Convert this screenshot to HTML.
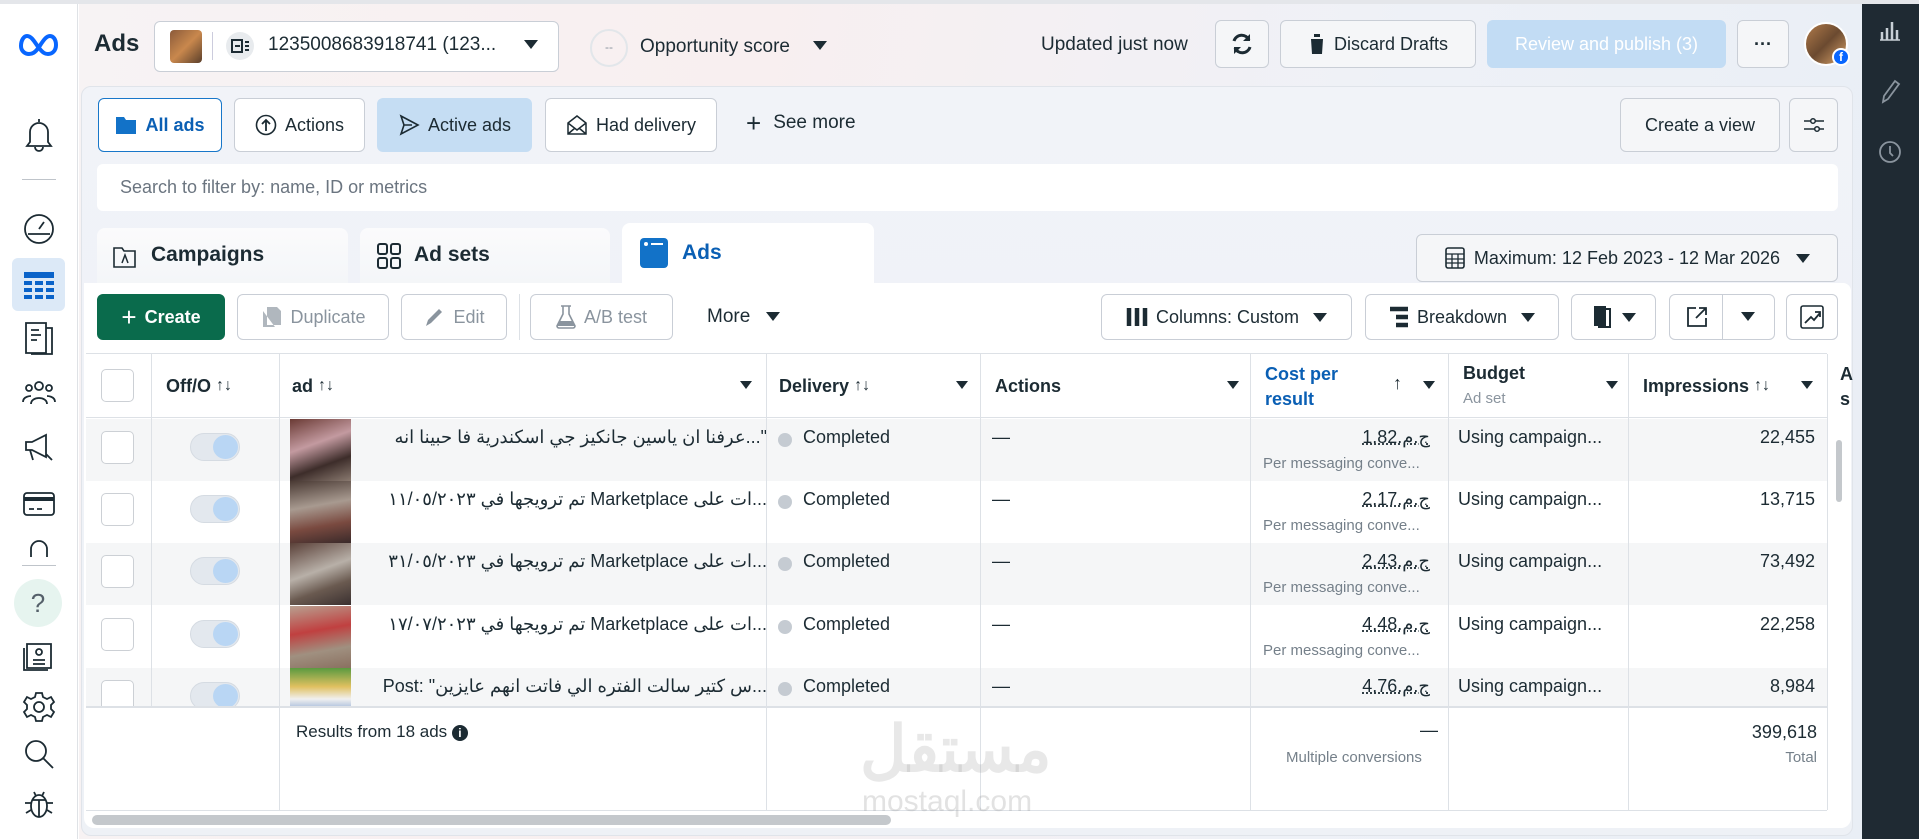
<!DOCTYPE html>
<html><head><meta charset="utf-8">
<style>
*{box-sizing:border-box;margin:0;padding:0}
body{width:1919px;height:839px;overflow:hidden;background:#fff;font-family:"Liberation Sans","Noto Sans CJK SC",sans-serif;color:#1c2b33;position:relative}
.a{position:absolute}
.btn{position:absolute;border:1px solid #c9ced6;border-radius:6px;background:#fff;display:flex;align-items:center;justify-content:center;font-size:18px;color:#1c2b33;gap:8px}
.ic{stroke:#1c2b33;fill:none;stroke-width:1.8}
.side svg{position:absolute;left:22px}
.hd{position:absolute;top:354px;height:64px;display:flex;align-items:center;font-size:18px;font-weight:bold;color:#1c2b33;padding-left:10px}
.vl{position:absolute;top:354px;width:1px;height:456px;background:#dde1e6}
.row{position:absolute;left:86px;width:1741px;height:62px}
.cb{position:absolute;left:15px;top:12px;width:33px;height:33px;border:1px solid #ccd0d5;border-radius:5px;background:#fff}
.tg{position:absolute;left:104px;top:14px;width:50px;height:28px;border-radius:14px;background:#e3e8ee;border:1px solid #d5dbe2}
.tg::after{content:"";position:absolute;right:1px;top:1px;width:25px;height:24px;border-radius:50%;background:#b9d6f4}
.th{position:absolute;left:204px;top:0;width:61px;height:62px}
.t{position:absolute;top:8px;font-size:18px;white-space:nowrap}
.sub{position:absolute;top:36px;font-size:15px;color:#75808a;white-space:nowrap}
.dot{position:absolute;left:692px;top:14px;width:14px;height:14px;border-radius:50%;background:#c5cbd2}
.cost{left:1194px;width:150px;text-align:right;text-decoration:underline dotted}
.imp{left:1560px;width:169px;text-align:right}
</style></head><body>
<div class="a" style="left:0;top:0;width:1919px;height:4px;background:#e4e6ea"></div>
<div class="a side" style="left:0;top:4px;width:78px;height:835px;background:#fff;border-right:1px solid #dfe2e6">
<svg style="left:17px;top:28px" width="44" height="24" viewBox="0 0 44 24"><path d="M4 14c0-6 3-10 6-10 5 0 8 7 12 12 4 5 6 6 9 6 4 0 8-3 8-9 0-6-3-9-6-9-4 0-7 5-11 11-4 6-7 7-10 7-4 0-8-3-8-8z" fill="none" stroke="#0866ff" stroke-width="4"/></svg>
<svg style="top:112px" width="34" height="36" viewBox="0 0 34 36"><path class="ic" d="M17 3v3M8 26V16a9 9 0 0 1 18 0v10l3 4H5l3-4zM13 31a4 4 0 0 0 8 0"/></svg>
<div class="a" style="left:22px;top:175px;width:34px;height:1px;background:#bfc4ca"></div>
<svg style="top:208px" width="34" height="34" viewBox="0 0 34 34"><circle class="ic" cx="17" cy="17" r="14"/><path class="ic" d="M17 17l5-7M6 22h22"/></svg>
<div class="a" style="left:12px;top:254px;width:53px;height:53px;background:#dce9f7;border-radius:6px"></div>
<svg style="top:266px" width="34" height="30" viewBox="0 0 34 30"><rect x="2" y="2" width="30" height="6" fill="#0a63c9"/><g fill="#0a63c9"><rect x="2" y="11" width="8" height="4"/><rect x="13" y="11" width="8" height="4"/><rect x="24" y="11" width="8" height="4"/><rect x="2" y="18" width="8" height="4"/><rect x="13" y="18" width="8" height="4"/><rect x="24" y="18" width="8" height="4"/><rect x="2" y="25" width="8" height="4"/><rect x="13" y="25" width="8" height="4"/><rect x="24" y="25" width="8" height="4"/></g></svg>
<svg style="top:316px" width="34" height="36" viewBox="0 0 34 36"><path class="ic" d="M4 3h20v30H4zM24 8h6v26H9M9 10h8M9 15h10M9 20h6"/></svg>
<svg style="top:374px" width="34" height="30" viewBox="0 0 34 30"><circle class="ic" cx="17" cy="8" r="4"/><circle class="ic" cx="7" cy="10" r="3"/><circle class="ic" cx="27" cy="10" r="3"/><path class="ic" d="M9 26c0-8 16-8 16 0M1 24c0-6 8-6 8-6M33 24c0-6-8-6-8-6"/></svg>
<svg style="top:428px" width="34" height="32" viewBox="0 0 34 32"><path class="ic" d="M4 10h6l14-7v22L10 18H4zM8 18l3 10M24 22l6 6"/></svg>
<svg style="top:486px" width="34" height="28" viewBox="0 0 34 28"><rect class="ic" x="2" y="3" width="30" height="22" rx="3"/><path d="M2 9h30" stroke="#1c2b33" stroke-width="4"/><path class="ic" d="M7 19h5M15 19h5"/></svg>
<svg style="top:535px" width="34" height="20" viewBox="0 0 34 20"><path class="ic" d="M9 18V10a8 8 0 0 1 16 0v8"/></svg>
<div class="a" style="left:22px;top:561px;width:34px;height:1px;background:#bfc4ca"></div>
<div class="a" style="left:14px;top:575px;width:48px;height:48px;border-radius:50%;background:#e6f4ef;font-size:26px;color:#55606a;text-align:center;line-height:48px">?</div>
<svg style="top:636px" width="34" height="32" viewBox="0 0 34 32"><path class="ic" d="M5 4h24v24H5zM2 8v22h24"/><circle class="ic" cx="17" cy="12" r="3"/><path class="ic" d="M11 20h12M11 24h12"/></svg>
<svg style="top:686px" width="34" height="34" viewBox="0 0 34 34"><circle class="ic" cx="17" cy="17" r="5"/><path class="ic" d="M14 3h6l1 4 4 2 4-2 3 5-3 3v4l3 3-3 5-4-2-4 2-1 4h-6l-1-4-4-2-4 2-3-5 3-3v-4L2 12l3-5 4 2 4-2z"/></svg>
<svg style="top:733px" width="34" height="34" viewBox="0 0 34 34"><circle class="ic" cx="14" cy="14" r="10" stroke-width="2.2"/><path class="ic" d="M21 21l10 10" stroke-width="2.4"/></svg>
<svg style="top:782px" width="34" height="34" viewBox="0 0 34 34"><ellipse class="ic" cx="17" cy="20" rx="8" ry="11"/><path class="ic" d="M9 17H3M25 17h6M9 24l-5 3M25 24l5 3M12 6l2 4M22 6l-2 4M10 14h14M17 14v17"/></svg>
</div>
<div class="a" style="left:79px;top:4px;width:1783px;height:835px;background:linear-gradient(100deg,#f7f3f4 0%,#f8eff0 35%,#eef1f7 70%,#e9eef5 100%)"></div>
<div class="a" style="left:94px;top:30px;font-size:24px;font-weight:bold">Ads</div>
<div class="a" style="left:154px;top:21px;width:405px;height:51px;background:#fff;border:1px solid #c9ced6;border-radius:6px"></div>
<div class="a" style="left:170px;top:30px;width:32px;height:33px;border-radius:4px;background:linear-gradient(135deg,#8a5a3a,#c9884d 50%,#5a3f2a)"></div>
<div class="a" style="left:212px;top:32px;width:1px;height:28px;background:#ccd"></div>
<div class="a" style="left:226px;top:32px;width:28px;height:28px;border-radius:50%;background:#e8ebee"></div>
<svg class="a" style="left:231px;top:38px" width="20" height="16" viewBox="0 0 20 16"><rect x="1" y="2" width="10" height="12" fill="none" stroke="#1c2b33" stroke-width="2"/><path d="M4 8h5M14 4h4M14 8h4M14 12h4" stroke="#1c2b33" stroke-width="2"/></svg>
<div class="a" style="left:268px;top:34px;font-size:19px">1235008683918741 (123...</div>
<div class="a" style="left:524px;top:40px;border-left:7px solid transparent;border-right:7px solid transparent;border-top:9px solid #1c2b33"></div>
<div class="a" style="left:590px;top:29px;width:38px;height:38px;border-radius:50%;border:2px solid #e2e6ea;font-size:12px;color:#8a949e;text-align:center;line-height:32px">--</div>
<div class="a" style="left:640px;top:36px;font-size:19px">Opportunity score</div>
<div class="a" style="left:813px;top:41px;border-left:7px solid transparent;border-right:7px solid transparent;border-top:9px solid #1c2b33"></div>
<div class="a" style="left:1041px;top:34px;font-size:19px">Updated just now</div>
<div class="btn" style="left:1215px;top:20px;width:54px;height:48px;background:#f5f6f8"><svg width="26" height="26" viewBox="0 0 26 26"><path d="M20 9A8 8 0 0 0 5 10M6 17a8 8 0 0 0 15-1" fill="none" stroke="#1c2b33" stroke-width="3"/><path d="M21 3v7h-7M5 23v-7h7" fill="#1c2b33"/></svg></div>
<div class="btn" style="left:1280px;top:20px;width:196px;height:48px;background:#f5f6f8"><svg width="18" height="22" viewBox="0 0 18 22"><path d="M1 4h16M6 4V1h6v3M3 6h12l-1 15H4z" fill="#1c2b33"/></svg>Discard Drafts</div>
<div class="btn" style="left:1487px;top:20px;width:239px;height:48px;background:#c2dcf4;border-color:#c2dcf4;color:#fff">Review and publish (3)</div>
<div class="btn" style="left:1737px;top:20px;width:52px;height:48px;background:#f5f6f8;font-weight:bold">···</div>
<div class="a" style="left:1804px;top:22px;width:44px;height:44px;border-radius:50%;background:linear-gradient(135deg,#b07a4a,#6b4a30 50%,#d9a36a);border:2px solid #fff"></div>
<div class="a" style="left:1832px;top:48px;width:18px;height:18px;border-radius:50%;background:#0866ff;border:2px solid #fff;color:#fff;font-size:12px;font-weight:bold;text-align:center;line-height:15px">f</div>
<div class="a" style="left:1862px;top:4px;width:57px;height:835px;background:#1f2a33"></div>
<svg class="a" style="left:1878px;top:18px" width="24" height="24" viewBox="0 0 24 24"><path d="M4 22V14M9 22V10M14 22V4M19 22V12" stroke="#c8cfd6" stroke-width="2.5" fill="none"/><path d="M2 22h20" stroke="#c8cfd6" stroke-width="1.5"/></svg>
<svg class="a" style="left:1878px;top:78px" width="24" height="26" viewBox="0 0 24 26"><path d="M5 24l1-6L17 3l4 3L10 21z" stroke="#8a949e" stroke-width="1.8" fill="none"/></svg>
<svg class="a" style="left:1877px;top:139px" width="26" height="26" viewBox="0 0 26 26"><circle cx="13" cy="13" r="10" stroke="#8a949e" stroke-width="1.8" fill="none"/><path d="M13 7v7l3 3" stroke="#8a949e" stroke-width="1.8" fill="none"/></svg>
<div class="a" style="left:81px;top:86px;width:1772px;height:750px;background:linear-gradient(180deg,#f1f3f8 0%,#eef1f6 100%);border:1px solid #e0e4ea;border-radius:10px"></div>
<div class="btn" style="left:98px;top:98px;width:124px;height:54px;border-color:#1877c9;color:#0a5fb4;font-weight:bold"><svg width="22" height="20" viewBox="0 0 22 20"><path d="M1 2h8l2 3h10v14H1z" fill="#1272c8"/></svg>All ads</div>
<div class="btn" style="left:234px;top:98px;width:131px;height:54px"><svg width="22" height="22" viewBox="0 0 22 22"><circle cx="11" cy="11" r="9.5" fill="none" stroke="#1c2b33" stroke-width="1.6"/><path d="M11 17V6M7 10l4-4 4 4" fill="none" stroke="#1c2b33" stroke-width="1.8"/></svg>Actions</div>
<div class="btn" style="left:377px;top:98px;width:155px;height:54px;background:#c5ddf3;border-color:#c5ddf3"><svg width="22" height="22" viewBox="0 0 22 22"><path d="M3 2l17 9-17 9 3-9z M6 11h8" fill="none" stroke="#1c2b33" stroke-width="1.6"/></svg>Active ads</div>
<div class="btn" style="left:545px;top:98px;width:172px;height:54px"><svg width="22" height="22" viewBox="0 0 22 22"><path d="M2 9l9-7 9 7v11H2zM2 9l9 7 9-7M2 20l7-6M20 20l-7-6" fill="none" stroke="#1c2b33" stroke-width="1.5"/></svg>Had delivery</div>
<div class="a" style="left:746px;top:112px;font-size:19px;display:flex;gap:12px;align-items:center"><span style="font-size:26px;font-weight:300;line-height:20px">+</span>See more</div>
<div class="btn" style="left:1620px;top:98px;width:160px;height:54px;background:#f5f6f8">Create a view</div>
<div class="btn" style="left:1789px;top:98px;width:49px;height:54px;background:#f5f6f8"><svg width="22" height="20" viewBox="0 0 22 20"><path d="M1 6h7M12 6h9M1 14h11M16 14h5" stroke="#1c2b33" stroke-width="1.5"/><circle cx="10" cy="6" r="2.3" fill="none" stroke="#1c2b33" stroke-width="1.5"/><circle cx="14" cy="14" r="2.3" fill="none" stroke="#1c2b33" stroke-width="1.5"/></svg></div>
<div class="a" style="left:97px;top:164px;width:1741px;height:47px;background:#fff;border-radius:6px"></div>
<div class="a" style="left:120px;top:177px;font-size:18px;color:#6b7580">Search to filter by: name, ID or metrics</div>
<div class="a" style="left:97px;top:228px;width:251px;height:60px;background:linear-gradient(180deg,#fbfbfc,#f3f5f8);border-radius:8px 8px 0 0"></div>
<svg class="a" style="left:113px;top:245px" width="24" height="24" viewBox="0 0 24 24"><path d="M1 3h8l2 3h11v16H1z" fill="none" stroke="#1c2b33" stroke-width="1.6"/><path d="M9 18l3-8 3 8" fill="none" stroke="#1c2b33" stroke-width="1.5"/></svg>
<div class="a" style="left:151px;top:243px;font-size:21px;font-weight:bold">Campaigns</div>
<div class="a" style="left:360px;top:228px;width:250px;height:60px;background:linear-gradient(180deg,#fbfbfc,#f3f5f8);border-radius:8px 8px 0 0"></div>
<svg class="a" style="left:376px;top:242px" width="26" height="28" viewBox="0 0 26 28"><g fill="none" stroke="#1c2b33" stroke-width="2"><rect x="2" y="2" width="9" height="10" rx="2"/><rect x="15" y="2" width="9" height="10" rx="2"/><rect x="2" y="16" width="9" height="10" rx="2"/><rect x="15" y="16" width="9" height="10" rx="2"/></g></svg>
<div class="a" style="left:414px;top:243px;font-size:21px;font-weight:bold">Ad sets</div>
<div class="a" style="left:622px;top:223px;width:252px;height:65px;background:#fff;border-radius:8px 8px 0 0"></div>
<svg class="a" style="left:640px;top:238px" width="28" height="30" viewBox="0 0 28 30"><rect x="0" y="0" width="28" height="30" rx="4" fill="#1272c8"/><circle cx="6" cy="6" r="2" fill="#fff"/><path d="M11 6h12" stroke="#fff" stroke-width="2"/></svg>
<div class="a" style="left:682px;top:241px;font-size:21px;font-weight:bold;color:#0a5fb4">Ads</div>
<div class="btn" style="left:1416px;top:234px;width:422px;height:48px;background:#f5f6f8"><svg width="22" height="22" viewBox="0 0 22 22"><rect x="2" y="1" width="18" height="20" rx="2" fill="none" stroke="#1c2b33" stroke-width="1.6"/><path d="M2 7h18M2 12h18M2 16h18M8 7v14M14 7v14" stroke="#1c2b33" stroke-width="1.3"/></svg>Maximum: 12 Feb 2023 - 12 Mar 2026<span style="margin-left:8px;border-left:7px solid transparent;border-right:7px solid transparent;border-top:9px solid #1c2b33"></span></div>
<div class="a" style="left:84px;top:283px;width:1767px;height:545px;background:#fff;border-radius:0 8px 10px 10px"></div>
<div class="btn" style="left:97px;top:294px;width:128px;height:46px;background:#0a6b4c;border-color:#0a6b4c;color:#fff;font-weight:bold"><span style="font-size:26px;font-weight:300;line-height:20px">+</span>Create</div>
<div class="btn" style="left:237px;top:294px;width:152px;height:46px;color:#8a949e"><svg width="22" height="24" viewBox="0 0 22 24"><path d="M7 2h10l4 4v14H7zM3 6v16h12" fill="#b0b7be"/></svg>Duplicate</div>
<div class="btn" style="left:401px;top:294px;width:106px;height:46px;color:#8a949e"><svg width="22" height="22" viewBox="0 0 22 22"><path d="M3 20l2-6L16 3l3 3L8 17z" fill="#8a949e"/></svg>Edit</div>
<div class="a" style="left:519px;top:294px;width:1px;height:46px;background:#dde1e6"></div>
<div class="btn" style="left:530px;top:294px;width:143px;height:46px;color:#8a949e"><svg width="20" height="24" viewBox="0 0 20 24"><path d="M7 1v8L1 21a2 2 0 0 0 2 2h14a2 2 0 0 0 2-2L13 9V1M5 1h10" fill="none" stroke="#8a949e" stroke-width="1.6"/><path d="M3 16h14l2 5H1z" fill="#8a949e"/></svg>A/B test</div>
<div class="a" style="left:707px;top:306px;font-size:19px">More</div>
<div class="a" style="left:766px;top:312px;border-left:7px solid transparent;border-right:7px solid transparent;border-top:9px solid #1c2b33"></div>
<div class="btn" style="left:1101px;top:294px;width:251px;height:46px"><svg width="22" height="20" viewBox="0 0 22 20"><path d="M3 1v18M11 1v18M19 1v18" stroke="#1c2b33" stroke-width="4.5"/></svg>Columns: Custom<span style="margin-left:6px;border-left:7px solid transparent;border-right:7px solid transparent;border-top:9px solid #1c2b33"></span></div>
<div class="btn" style="left:1365px;top:294px;width:194px;height:46px"><svg width="20" height="22" viewBox="0 0 20 22"><path d="M1 3h18M7 11h12M7 19h12" stroke="#1c2b33" stroke-width="4.5"/></svg>Breakdown<span style="margin-left:6px;border-left:7px solid transparent;border-right:7px solid transparent;border-top:9px solid #1c2b33"></span></div>
<div class="btn" style="left:1571px;top:294px;width:85px;height:46px"><svg width="22" height="24" viewBox="0 0 22 24"><path d="M2 1h12v20H2z" fill="#1c2b33"/><path d="M14 4h4v18H6" fill="none" stroke="#1c2b33" stroke-width="2"/></svg><span style="border-left:7px solid transparent;border-right:7px solid transparent;border-top:9px solid #1c2b33"></span></div>
<div class="btn" style="left:1669px;top:294px;width:106px;height:46px;justify-content:flex-start"><svg style="margin-left:16px" width="22" height="22" viewBox="0 0 22 22"><path d="M10 2H2v18h18v-8M13 2h7v7M20 2L10 12" fill="none" stroke="#1c2b33" stroke-width="1.8"/></svg></div>
<div class="a" style="left:1722px;top:295px;width:1px;height:44px;background:#c9ced6"></div>
<div class="a" style="left:1741px;top:312px;border-left:7px solid transparent;border-right:7px solid transparent;border-top:9px solid #1c2b33"></div>
<div class="btn" style="left:1786px;top:294px;width:52px;height:46px"><svg width="24" height="24" viewBox="0 0 24 24"><rect x="1" y="1" width="22" height="22" rx="2" fill="none" stroke="#1c2b33" stroke-width="1.6"/><path d="M5 18l6-6 3 3 6-7M15 7h5v5" fill="none" stroke="#1c2b33" stroke-width="1.8"/></svg></div>
<div class="a" style="left:86px;top:353px;width:1741px;height:1px;background:#dde1e6"></div>
<div class="a" style="left:101px;top:369px;width:33px;height:33px;border:1px solid #ccd0d5;border-radius:5px"></div>
<div class="hd" style="left:156px">Off/O&nbsp;<span style="font-size:16px">↑↓</span></div>
<div class="hd" style="left:282px">ad&nbsp;<span style="font-size:16px">↑↓</span></div>
<div class="a" style="left:740px;top:381px;border-left:6px solid transparent;border-right:6px solid transparent;border-top:8px solid #1c2b33"></div>
<div class="hd" style="left:769px">Delivery&nbsp;<span style="font-size:16px">↑↓</span></div>
<div class="a" style="left:956px;top:381px;border-left:6px solid transparent;border-right:6px solid transparent;border-top:8px solid #1c2b33"></div>
<div class="hd" style="left:985px">Actions</div>
<div class="a" style="left:1227px;top:381px;border-left:6px solid transparent;border-right:6px solid transparent;border-top:8px solid #1c2b33"></div>
<div class="a" style="left:1265px;top:362px;font-size:18px;font-weight:bold;color:#0a5fb4;line-height:25px">Cost per<br>result</div>
<div class="a" style="left:1393px;top:373px;font-size:18px">↑</div>
<div class="a" style="left:1423px;top:381px;border-left:6px solid transparent;border-right:6px solid transparent;border-top:8px solid #1c2b33"></div>
<div class="a" style="left:1463px;top:363px;font-size:18px;font-weight:bold">Budget</div>
<div class="a" style="left:1463px;top:390px;font-size:15px;color:#8a949e">Ad set</div>
<div class="a" style="left:1606px;top:381px;border-left:6px solid transparent;border-right:6px solid transparent;border-top:8px solid #1c2b33"></div>
<div class="hd" style="left:1633px">Impressions&nbsp;<span style="font-size:16px">↑↓</span></div>
<div class="a" style="left:1801px;top:381px;border-left:6px solid transparent;border-right:6px solid transparent;border-top:8px solid #1c2b33"></div>
<div class="a" style="left:1840px;top:362px;font-size:18px;font-weight:bold;line-height:25px">A<br>s</div>
<div class="a" style="left:86px;top:417px;width:1741px;height:1px;background:#dde1e6"></div>
<div class="row" style="top:419px;background:#f5f6f7"><div class="cb"></div><div class="tg"></div><div class="th" style="background:linear-gradient(160deg,#6a3a34,#c39aa0 40%,#3d2d2a 70%,#8a7a70)"></div><div class="t" style="left:276px;direction:rtl;width:405px;text-align:right">"...عرفنا ان ياسين جانكيز جي اسكندرية فا حبينا انه</div><div class="dot"></div><div class="t" style="left:717px">Completed</div><div class="t" style="left:906px">—</div><div class="t cost">1.82.ج.م</div><div class="sub" style="left:1177px">Per messaging conve...</div><div class="t" style="left:1372px">Using campaign...</div><div class="t imp">22,455</div></div>
<div class="row" style="top:481px;background:#fff"><div class="cb"></div><div class="tg"></div><div class="th" style="background:linear-gradient(170deg,#4a3a34,#a89a90 40%,#7a4a40 70%,#3a2a2a)"></div><div class="t" style="left:276px;direction:rtl;width:405px;text-align:right">...ات على Marketplace تم ترويجها في ١١/٠٥/٢٠٢٣</div><div class="dot"></div><div class="t" style="left:717px">Completed</div><div class="t" style="left:906px">—</div><div class="t cost">2.17.ج.م</div><div class="sub" style="left:1177px">Per messaging conve...</div><div class="t" style="left:1372px">Using campaign...</div><div class="t imp">13,715</div></div>
<div class="row" style="top:543px;background:#f5f6f7"><div class="cb"></div><div class="tg"></div><div class="th" style="background:linear-gradient(160deg,#5a4038,#b8b0a8 45%,#6a5a50 70%,#3a3030)"></div><div class="t" style="left:276px;direction:rtl;width:405px;text-align:right">...ات على Marketplace تم ترويجها في ٣١/٠٥/٢٠٢٣</div><div class="dot"></div><div class="t" style="left:717px">Completed</div><div class="t" style="left:906px">—</div><div class="t cost">2.43.ج.م</div><div class="sub" style="left:1177px">Per messaging conve...</div><div class="t" style="left:1372px">Using campaign...</div><div class="t imp">73,492</div></div>
<div class="row" style="top:606px;background:#fff"><div class="cb"></div><div class="tg"></div><div class="th" style="background:linear-gradient(170deg,#b8a090,#c04040 40%,#a09080 70%,#8a7060)"></div><div class="t" style="left:276px;direction:rtl;width:405px;text-align:right">...ات على Marketplace تم ترويجها في ١٧/٠٧/٢٠٢٣</div><div class="dot"></div><div class="t" style="left:717px">Completed</div><div class="t" style="left:906px">—</div><div class="t cost">4.48.ج.م</div><div class="sub" style="left:1177px">Per messaging conve...</div><div class="t" style="left:1372px">Using campaign...</div><div class="t imp">22,258</div></div>
<div class="row" style="top:668px;height:39px;overflow:hidden;background:#f5f6f7"><div class="cb"></div><div class="tg"></div><div class="th" style="background:linear-gradient(180deg,#5a9a40,#e0c060 30%,#f0f0f0 50%,#4a7ac0 85%)"></div><div class="t" style="left:276px;direction:rtl;width:405px;text-align:right">...س كتير سالت الفتره الي فاتت انهم عايزين" :Post</div><div class="dot"></div><div class="t" style="left:717px">Completed</div><div class="t" style="left:906px">—</div><div class="t cost">4.76.ج.م</div><div class="t" style="left:1372px">Using campaign...</div><div class="t imp">8,984</div></div>
<div class="a" style="left:86px;top:706px;width:1741px;height:2px;background:#dde1e6"></div>
<div class="vl" style="left:151px;height:353px"></div>
<div class="vl" style="left:279px"></div>
<div class="vl" style="left:766px"></div>
<div class="vl" style="left:980px"></div>
<div class="vl" style="left:1250px"></div>
<div class="vl" style="left:1448px"></div>
<div class="vl" style="left:1628px"></div>
<div class="vl" style="left:1827px"></div>
<div class="a" style="left:296px;top:722px;font-size:17px">Results from 18 ads <span style="display:inline-block;width:16px;height:16px;border-radius:50%;background:#1c2b33;color:#fff;font-size:12px;text-align:center;line-height:16px;font-weight:bold">i</span></div>
<div class="a" style="left:1420px;top:720px;font-size:18px">—</div>
<div class="a" style="left:1286px;top:749px;font-size:15px;color:#75808a">Multiple conversions</div>
<div class="a" style="left:1700px;top:722px;font-size:18px;width:117px;text-align:right">399,618</div>
<div class="a" style="left:1700px;top:749px;font-size:15px;color:#75808a;width:117px;text-align:right">Total</div>
<div class="a" style="left:86px;top:810px;width:1741px;height:1px;background:#dde1e6"></div>
<div class="a" style="left:860px;top:712px;font-size:64px;font-weight:bold;color:rgba(150,150,150,0.22);direction:rtl">مستقل</div>
<div class="a" style="left:862px;top:785px;font-size:30px;color:rgba(150,150,150,0.28)">mostaql.com</div>
<div class="a" style="left:92px;top:815px;width:799px;height:10px;border-radius:5px;background:#c4c8cc"></div>
<div class="a" style="left:1836px;top:440px;width:6px;height:62px;border-radius:3px;background:#c4c8cc"></div>
</body></html>
